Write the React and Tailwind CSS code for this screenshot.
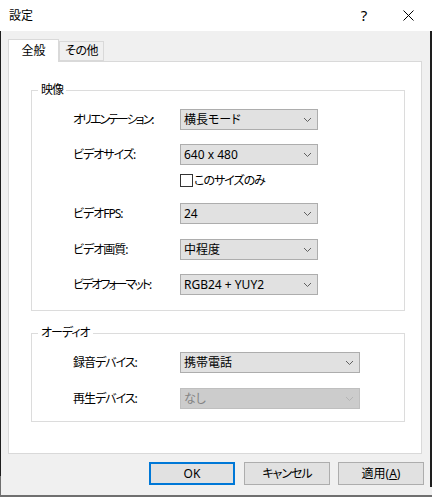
const font = {
  fontFamily: '"Noto Sans", "Noto Sans CJK JP", sans-serif',
};

function Chevron({ disabled }) {
  return (
    <svg width="9" height="6" viewBox="0 0 9 6" className="shrink-0">
      <polyline
        points="1,1 4.5,4.5 8,1"
        fill="none"
        stroke={disabled ? '#b4b4b4' : '#606060'}
        strokeWidth="1"
      />
    </svg>
  );
}

function Select({ value, width, disabled }) {
  return (
    <div
      className={
        'h-[21px] flex items-center justify-between pl-[3px] pr-[5px] border ' +
        (disabled
          ? 'bg-[#cccccc] border-[#bfbfbf] text-[#838383]'
          : 'bg-[#e1e1e1] border-[#adadad] text-black')
      }
      style={{ width }}
    >
      <span className="leading-none">{value}</span>
      <Chevron disabled={disabled} />
    </div>
  );
}

function Row({ label, value, width = 138, disabled, tight, className = '' }) {
  return (
    <div className={'flex items-center h-[21px] ' + className}>
      <span
        className={
          'w-[107px] shrink-0 leading-none ' +
          (tight ? 'tracking-[-2px]' : 'tracking-[-1px]')
        }
      >
        {label}
      </span>
      <Select value={value} width={width} disabled={disabled} />
    </div>
  );
}

function Group({ title, children, className = '' }) {
  return (
    <fieldset className={'border border-[#dcdcdc] w-[374px] ' + className}>
      <legend className="ml-[6px] px-[3px] leading-[16px] tracking-[-1px]">{title}</legend>
      {children}
    </fieldset>
  );
}

function Button({ children, primary, className = '' }) {
  return (
    <div
      className={
        'w-[86px] h-[23px] flex items-center justify-center bg-[#e1e1e1] ' +
        (primary ? 'border-2 border-[#0078d7]' : 'border border-[#adadad]') +
        ' ' +
        className
      }
    >
      {children}
    </div>
  );
}

export default function App() {
  return (
    <div
      className="relative w-[432px] h-[497px] bg-[#f0f0f0] overflow-hidden text-[12px] text-black [font-feature-settings:'palt']"
      style={font}
    >
      {/* title bar */}
      <div className="h-[31px] bg-white flex items-center pl-[9px] pr-[2px]">
        <span className="flex-1">設定</span>
        <div className="w-[44px] h-[31px] flex items-center justify-center text-[15px]">?</div>
        <div className="w-[44px] h-[31px] flex items-center justify-center">
          <svg width="11" height="11" viewBox="0 0 11 11">
            <path d="M0.5 0.5 L10.5 10.5 M10.5 0.5 L0.5 10.5" stroke="#000" strokeWidth="1" />
          </svg>
        </div>
      </div>

      <div className="pl-[8px] pt-[8px]">
        {/* tabs */}
        <div className="flex items-start h-[22px]">
          <div className="relative z-10 w-[51px] h-[23px] bg-white border border-b-0 border-[#d9d9d9] flex items-center justify-center pb-[1px]">
            全般
          </div>
          <div className="w-[45px] h-[20px] mt-[2px] bg-[#f0f0f0] border border-[#d9d9d9] flex items-center justify-center tracking-[-0.5px]">
            その他
          </div>
        </div>

        {/* panel */}
        <div className="w-[414px] h-[393px] bg-white border border-[#d9d9d9] pl-[22px] pt-[20px]">
          <Group title="映像" className="pb-[15px]">
            <div className="pl-[41px]">
              <Row label="オリエンテーション:" value="横長モード" tight className="mt-[11px]" />
              <Row label="ビデオサイズ:" value="640 x 480" className="mt-[14px]" />
              <div className="flex items-center h-[13px] mt-[9px] pl-[107px]">
                <div className="w-[13px] h-[13px] border border-[#333333] bg-white shrink-0" />
                <span className="ml-[1px] leading-none tracking-[-1px]">このサイズのみ</span>
              </div>
              <Row label="ビデオFPS:" value="24" className="mt-[16px]" />
              <Row label="ビデオ画質:" value="中程度" className="mt-[15px]" />
              <Row label="ビデオフォーマット:" value="RGB24 + YUY2" tight className="mt-[14px]" />
            </div>
          </Group>

          <Group title="オーディオ" className="mt-[14px] pb-[12px]">
            <div className="pl-[41px]">
              <Row label="録音デバイス:" value="携帯電話" width={180} className="mt-[11px]" />
              <Row label="再生デバイス:" value="なし" width={180} disabled className="mt-[15px]" />
            </div>
          </Group>
        </div>

        {/* buttons */}
        <div className="flex justify-end pr-[8px] mt-[8px]">
          <Button primary>OK</Button>
          <Button className="ml-[9px] tracking-[-1px]">キャンセル</Button>
          <Button className="ml-[8px]">
            適用(<span className="underline">A</span>)
          </Button>
        </div>
      </div>

      {/* window edges */}
      <div className="absolute left-0 top-[31px] w-px h-[445px] bg-[#1e1e1e]" />
      <div className="absolute left-0 top-[476px] w-px h-[21px] bg-[#6f6f6f]" />
      <div className="absolute right-0 top-[31px] w-[2px] h-[456px] bg-[#1e1e1e]" />
      <div className="absolute left-0 bottom-0 w-full h-[2px] bg-[#6f6f6f]" />
    </div>
  );
}
